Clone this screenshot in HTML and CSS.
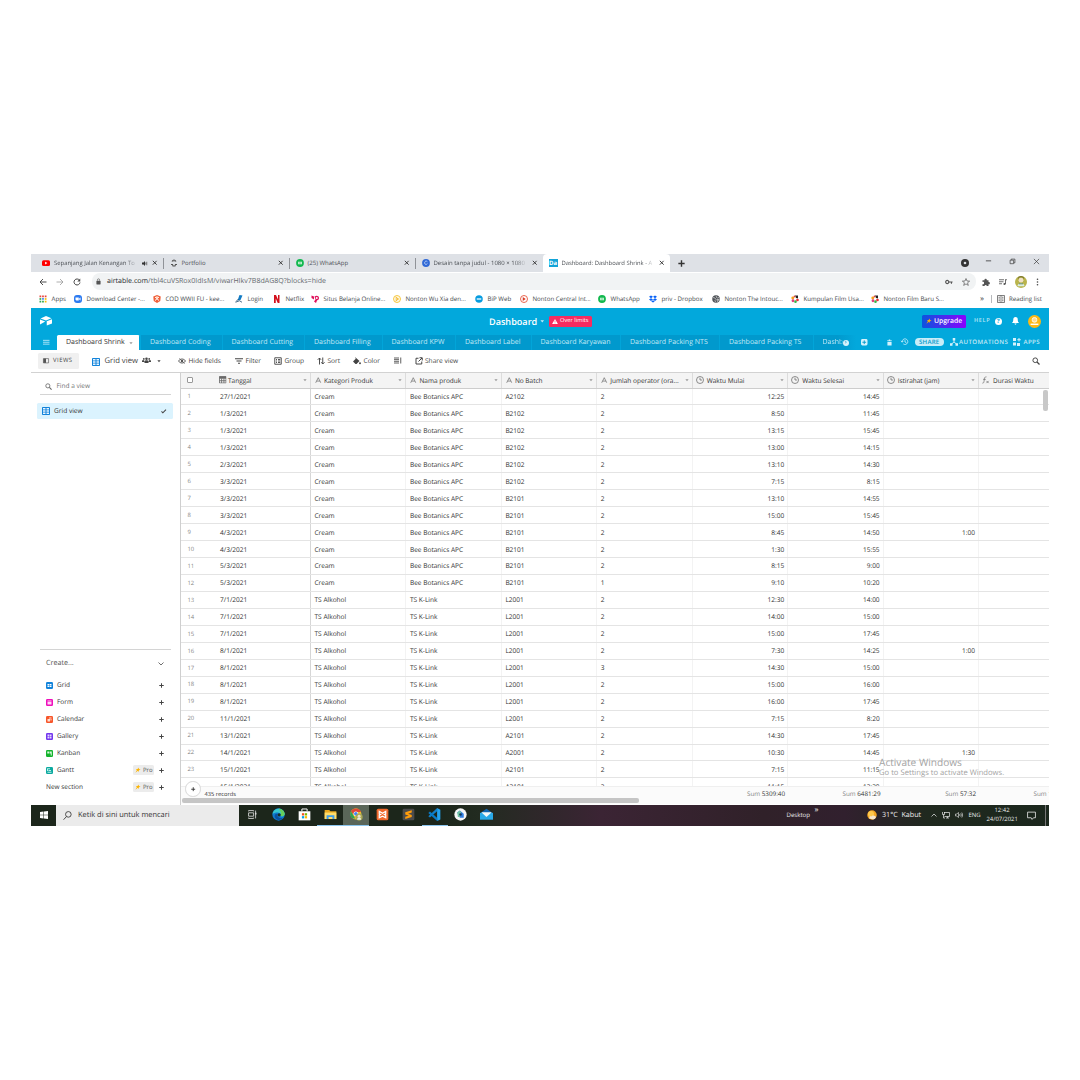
FILE: index.html
```html
<!DOCTYPE html>
<html lang="id">
<head>
<meta charset="utf-8">
<title>Dashboard: Dashboard Shrink - Airtable</title>
<link rel="stylesheet" href="styles.css">
</head>
<body>
<svg class="sprite" aria-hidden="true">
  <symbol id="x" viewBox="0 0 10 10"><path d="M1.5 1.5l7 7M8.5 1.5l-7 7" stroke="currentColor" stroke-width="1.7" fill="none"/></symbol>
  <symbol id="plus" viewBox="0 0 10 10"><path d="M5 .5v9M.5 5h9" stroke="currentColor" stroke-width="2" fill="none"/></symbol>
  <symbol id="caret" viewBox="0 0 10 10"><path d="M1 3h8L5 8z" fill="currentColor"/></symbol>
  <symbol id="search" viewBox="0 0 16 16"><circle cx="6.5" cy="6.5" r="4.7" fill="none" stroke="currentColor" stroke-width="1.9"/><path d="M10 10l5 5" stroke="currentColor" stroke-width="2.4"/></symbol>
  <symbol id="whatsapp" viewBox="0 0 16 16"><circle cx="8" cy="8" r="7.8" fill="#12b84e"/><path d="M4 5.5h8v5H4z" fill="#d9f7e3"/><path d="M5 8h6" stroke="#12b84e" stroke-width="1.2"/></symbol>
  <symbol id="film" viewBox="0 0 16 16"><circle cx="3.500" cy="6" r="2.800" fill="#f7a11a"/><path d="M8 1h6v6l-4-1z" fill="#222"/><circle cx="4" cy="11.500" r="2.800" fill="#e23c7c"/><circle cx="9" cy="13.300" r="2.600" fill="#39b54a"/><circle cx="13" cy="10" r="2.700" fill="#e33"/><circle cx="7" cy="3" r="1.800" fill="#e8453c"/></symbol>
  <symbol id="gridicon" viewBox="0 0 16 16"><rect width="16" height="16" rx="1.5" fill="#1283da"/><path d="M2 2h5v3H2zM9 2h5v3H9zM2 6.600h5v3H2zM9 6.600h5v3H9zM2 11.200h5v3H2zM9 11.200h5v3H9z" fill="#eaf6ff"/></symbol>
  <symbol id="letter" viewBox="0 0 14 14"><path d="M1.500 12.500L7 1.500l5.500 11M3.500 8.800h7" fill="none" stroke="currentColor" stroke-width="1.500"/></symbol>
  <symbol id="clock" viewBox="0 0 16 16"><circle cx="8" cy="8" r="7" fill="none" stroke="currentColor" stroke-width="1.500"/><path d="M8 3.500V8h4" fill="none" stroke="currentColor" stroke-width="1.500"/></symbol>
  <symbol id="date" viewBox="0 0 16 16"><path d="M1 1h14v14H1zM1 5h14M5.500 5v10M10.500 5v10M1 10h14" fill="none" stroke="currentColor" stroke-width="1.800"/><path d="M1 1h14v3H1z" fill="currentColor"/></symbol>
  <symbol id="fx" viewBox="0 0 18 16"><path d="M1 15c3 1 3.500-3 4-7s1-8 5-7M2.500 6.500h6M10 10l5 5M15 10l-5 5" fill="none" stroke="currentColor" stroke-width="1.600"/></symbol>
  <symbol id="spark" viewBox="0 0 16 16"><path d="M9 1l1.500 4.500L15 7l-4.500 1.500L9 13l-1.500-3L1 15l4-6.500L2.500 6 7 5.500z" fill="#fcb400"/></symbol>
</svg>

<main class="screen">
  <header class="tabstrip">
    <div class="tab"><svg viewBox="0 0 16 16"><rect y="2.500" width="16" height="11.500" rx="3" fill="#f00"/><path d="M6.300 5.500l4.500 2.700-4.500 2.700z" fill="#fff"/></svg><span class="title">Sepanjang Jalan Kenangan To</span><svg class="sound" viewBox="0 0 12 10"><path d="M0 3h3l3-3v10L3 7H0z" fill="#333"/><path d="M7.500 3v4M9.500 1.500v7" stroke="#333" stroke-width="1.200"/></svg><svg class="close"><use href="#x"/></svg></div>
    <div class="tab"><svg viewBox="0 0 16 16"><path d="M4 5c2-3 6-3 8 0M2 11h3l1 3h4l1-3h3" stroke="#555" stroke-width="2.200" fill="none"/><circle cx="8" cy="3" r="1.800" fill="#777"/></svg><span class="title">Portfolio</span><svg class="close"><use href="#x"/></svg></div>
    <div class="tab"><svg><use href="#whatsapp"/></svg><span class="title">(25) WhatsApp</span><svg class="close"><use href="#x"/></svg></div>
    <div class="tab"><svg viewBox="0 0 16 16"><circle cx="8" cy="8" r="7.800" fill="#3169d6"/><path d="M10.800 5.500c-3-3-6 0-5.500 3 .5 2.800 3.500 3 5.500.8" stroke="#d9eaff" stroke-width="1.500" fill="none"/></svg><span class="title">Desain tanpa judul - 1080 × 1080</span><svg class="close"><use href="#x"/></svg></div>
    <div class="tab active"><b class="da">Da</b><span class="title">Dashboard: Dashboard Shrink - A</span><svg class="close"><use href="#x"/></svg></div>
    <svg class="newtab"><use href="#plus"/></svg>
    <div class="window-controls">
      <svg viewBox="0 0 16 16"><circle cx="8" cy="8" r="8" fill="#333"/><circle cx="8" cy="8" r="2.600" fill="#dee1e6"/></svg>
      <svg viewBox="0 0 16 16"><path d="M2 6.500h12" stroke="#333" stroke-width="1.800"/></svg>
      <svg viewBox="0 0 16 16"><path d="M2.500 5h8v8h-8zM5 4.500V2.500h8.500V11H11" stroke="#333" stroke-width="1.500" fill="none"/></svg>
      <svg viewBox="0 0 16 16"><path d="M2 2l12 12M14 2L2 14" stroke="#333" stroke-width="1.500"/></svg>
    </div>
  </header>

  <div class="address-row">
    <svg viewBox="0 0 16 16"><path d="M15 8H2M8 2L2 8l6 6" stroke="#444" stroke-width="1.900" fill="none"/></svg>
    <svg viewBox="0 0 16 16"><path d="M1 8h13M8 2l6 6-6 6" stroke="#999" stroke-width="1.600" fill="none"/></svg>
    <svg viewBox="0 0 16 16"><path d="M13 4.500A6 6 0 1 0 14 9" stroke="#444" stroke-width="2" fill="none"/><path d="M14.500 1v6h-6z" fill="#444"/></svg>
    <div class="omnibox">
      <svg class="lock" viewBox="0 0 12 16"><rect x="1" y="6" width="10" height="9" rx="1" fill="#555"/><path d="M3.500 6V4a2.500 2.500 0 0 1 5 0v2" stroke="#555" stroke-width="1.500" fill="none"/></svg>
      <span class="url"><b>airtable.com</b>/tbl4cuVSRox0IdIsM/viwarHIkv7B8dAG8Q?blocks=hide</span>
      <svg class="key" viewBox="0 0 18 12"><circle cx="5" cy="6" r="3.500" fill="none" stroke="#555" stroke-width="2.600"/><path d="M9 6h8M14.500 6v4" stroke="#555" stroke-width="2.500"/></svg>
      <svg class="star" viewBox="0 0 16 16"><path d="M8 1l2 5 5.300.3-4.200 3.300 1.500 5.200L8 11.800l-4.600 3 1.500-5.200L.7 6.300 6 6z" stroke="#555" stroke-width="1.400" fill="none"/></svg>
    </div>
    <svg viewBox="0 0 16 16"><path d="M1 4.500h4a2.300 2.300 0 1 1 4.500 0H13V8a2.300 2.300 0 1 1 0 4.500V16H9.500a2.200 2.200 0 1 0-4.400 0H1v-4a2.200 2.200 0 1 0 0-4z" fill="#555"/></svg>
    <svg viewBox="0 0 16 16"><path d="M0 3.500h10M0 7.500h9M0 11.500h6M13 3v9M12.500 3.500H16" stroke="#555" stroke-width="1.700"/><circle cx="11" cy="12" r="2.200" fill="#555"/></svg>
    <svg class="profile" viewBox="0 0 20 20"><circle cx="10" cy="10" r="10" fill="#b9b44c"/><circle cx="10" cy="7" r="4" fill="#efe0c7"/><path d="M4 17c1-7 11-7 12 0" fill="#dceee2"/><path d="M5 4c2-4 8-4 10 0" stroke="#7d7730" stroke-width="2" fill="none"/><path d="M6.500 13h7" stroke="#577b55" stroke-width="1.500"/></svg>
    <svg class="kebab" viewBox="0 0 6 16"><circle cx="3" cy="2.500" r="1.600"/><circle cx="3" cy="8" r="1.600"/><circle cx="3" cy="13.500" r="1.600"/></svg>
  </div>

  <nav class="bookmarks">
    <a><svg viewBox="0 0 16 16"><path d="M1 1h3.500v3.500H1zM6.200 1h3.500v3.500H6.200zM11.500 1H15v3.500h-3.500z" fill="#e8453c"/><path d="M1 6.200h3.500v3.500H1z" fill="#34a853"/><path d="M6.200 6.200h3.500v3.500H6.200z" fill="#4285f4"/><path d="M11.500 6.200H15v3.500h-3.500z" fill="#fbbc05"/><path d="M1 11.500h3.500V15H1zM6.200 11.500h3.500V15H6.200z" fill="#34a853"/><path d="M11.500 11.500H15V15h-3.500z" fill="#fbbc05"/></svg>Apps</a>
    <a><svg viewBox="0 0 16 16"><rect width="16" height="16" rx="6" fill="#2d7bf0"/><path d="M3 5h6.500v6H4.500L3 9.500zM10.300 7L13 5v6l-2.700-2z" fill="#fff"/></svg>Download Center -...</a>
    <a><svg viewBox="0 0 16 16"><path d="M8 0l7.500 3-1 9L8 16l-6.500-4-1-9z" fill="#f0603a"/><path d="M4 4l8 7M12 4l-8 7" stroke="#fff" stroke-width="2"/><circle cx="8" cy="5" r="2.500" fill="#ffd7c4"/></svg>COD WWII FU - kee...</a>
    <a><svg viewBox="0 0 16 16"><path d="M9 0l6 1-4 9-6 1z" fill="#127bc4"/><path d="M1 14.500l8-3 5 3M7 8l-5 5" stroke="#214b6e" stroke-width="1.600" fill="none"/></svg>Login</a>
    <a><svg viewBox="0 0 16 16"><path d="M2 0h4l4 9V0h3v16H9.500L5.500 7v9H2z" fill="#d3101c"/></svg>Netflix</a>
    <a><svg viewBox="0 0 16 16"><path d="M1 1l5 2v6L1 6zM7 3c4-3 9-1 9 3 0 3-2 4-4 5l-2 5-4-3 3-4z" fill="#e0115b"/><circle cx="11.500" cy="6" r="2" fill="#fff"/></svg>Situs Belanja Online...</a>
    <a><svg viewBox="0 0 16 16"><circle cx="8" cy="8" r="7" stroke="#f4bf26" stroke-width="1.700" fill="#fffbe9"/><path d="M5 4l6 4-6 4M5 8h3" stroke="#f0ae12" stroke-width="1.800" fill="none"/></svg>Nonton Wu Xia den...</a>
    <a><svg viewBox="0 0 16 16"><circle cx="8" cy="8" r="7.500" fill="#079cdf"/><path d="M3.500 8h9" stroke="#d4f1ff" stroke-width="3"/></svg>BiP Web</a>
    <a><svg viewBox="0 0 16 16"><circle cx="8" cy="8" r="7" stroke="#e8553b" stroke-width="1.800" fill="#fff"/><path d="M5.500 4l6 4-6 4z" fill="#d83b28"/></svg>Nonton Central Int...</a>
    <a><svg><use href="#whatsapp"/></svg>WhatsApp</a>
    <a><svg viewBox="0 0 16 16"><path d="M4 1l4 2.700-4 2.700L0 3.700zM12 1l4 2.700-4 2.700-4-2.700zM4 6.400l4 2.700-4 2.700-4-2.700zM12 6.400l4 2.700-4 2.700-4-2.700zM8 10.500l3.500 2.300L8 15l-3.500-2.200z" fill="#0b63f6"/></svg>priv - Dropbox</a>
    <a><svg viewBox="0 0 16 16"><circle cx="8" cy="8" r="7.500" fill="#505459"/><path d="M2 5l4 1 2 3-2 2 1 3M9 2l-1 2 3 2 3-1M10 9l4 0-3 4z" stroke="#e8e8e8" stroke-width="1.200" fill="none"/></svg>Nonton The Intouc...</a>
    <a><svg><use href="#film"/></svg>Kumpulan Film Usa...</a>
    <a><svg><use href="#film"/></svg>Nonton Film Baru S...</a>
    <span class="more">»</span>
    <a class="reading"><svg viewBox="0 0 16 16"><path d="M1 1h14v14H1zM8 1v14" stroke="#555" fill="none" stroke-width="1.500"/><path d="M3 4.500h3M3 8h3M3 11.500h3M10 4.500h3M10 8h3M10 11.500h3" stroke="#555" stroke-width="1.500"/></svg>Reading list</a>
  </nav>

  <section class="base-header">
    <svg class="logo" viewBox="0 0 24 20"><path d="M1 5L12 0l11 4.500L12 9z" fill="#fff"/><path d="M13.500 10.500L24 6.500v8.500l-10.500 4z" fill="#fff"/><path d="M0 7l10.500 4L0 17z" fill="#fff"/></svg>
    <div class="base-title"><strong>Dashboard</strong><svg><use href="#caret"/></svg><span class="limits"><svg viewBox="0 0 14 12"><path d="M7 0l7 12H0z" fill="#fff"/><path d="M7 4v4M7 9v1.500" stroke="#f82b60" stroke-width="1.400"/></svg>Over limits</span></div>
    <div class="account">
      <span class="upgrade"><svg><use href="#spark"/></svg>Upgrade</span>
      <span class="help">HELP</span>
      <span class="question">?</span>
      <svg class="bell" viewBox="0 0 14 16"><path d="M7 0c3 0 4.500 2 4.500 5 0 4 1 5 2.500 7H0c1.500-2 2.500-3 2.500-7C2.500 2 4 0 7 0zM5 13h4c0 3-4 3-4 0z" fill="#fff"/></svg>
      <svg class="avatar" viewBox="0 0 20 20"><circle cx="10" cy="10" r="10" fill="#fcb916"/><rect x="6.500" y="4" width="7" height="7" rx="3" fill="#fbdc94" stroke="#fff" stroke-width="1.300"/><path d="M4 14.300h12" stroke="#fff" stroke-width="2.200"/></svg>
    </div>
  </section>

  <nav class="tables">
    <svg class="menu" viewBox="0 0 12 10"><path d="M0 1.500h12M0 5h12M0 8.500h12" stroke="#c9effc" stroke-width="1.500"/></svg>
    <a class="current">Dashboard Shrink<svg><use href="#caret"/></svg></a>
    <a>Dashboard Coding</a><a>Dashboard Cutting</a><a>Dashboard Filling</a><a>Dashboard KPW</a><a>Dashboard Label</a><a>Dashboard Karyawan</a><a>Dashboard Packing NTS</a><a>Dashboard Packing TS</a>
    <a class="cut"><span>Dashb</span><i></i></a>
    <svg class="addtable" viewBox="0 0 14 14"><rect width="14" height="14" rx="3" fill="#d5f2fc"/><path d="M7 3v8M3 7h8" stroke="#0198cb" stroke-width="2"/></svg>
    <svg class="trash" viewBox="0 0 12 14"><path d="M0 2h3.500l1-2h3l1 2H12v1.500H0zM1 5h10v9H1z" fill="#d5f2fc"/></svg>
    <svg class="history" viewBox="0 0 16 16"><path d="M2.500 8A6 6 0 1 1 5 12.700M0 6l2.500 3L5 6M8.500 4.500V8.500l3 1.500" stroke="#d5f2fc" stroke-width="1.700" fill="none"/></svg>
    <span class="share">SHARE</span>
    <span class="auto"><svg viewBox="0 0 16 16"><path d="M8 4v4L3 12M8 8l5 4" stroke="#d5f2fc" stroke-width="1.800" fill="none"/><path d="M5.500 0h5v5h-5zM0 10.500h5v5H0zM11 10.500h5v5h-5z" fill="#d5f2fc"/></svg>AUTOMATIONS</span>
    <span class="apps"><svg viewBox="0 0 16 16"><path d="M0 0h6v6H0zM0 9h6v6H0zM8 10h6v6H8zM11 0h2v7h-2zM8.500 2.500h7v2h-7z" fill="#d5f2fc"/></svg>APPS</span>
  </nav>

  <div class="viewbar">
    <span class="views"><svg viewBox="0 0 14 12"><path d="M1 1h12v10H1z" fill="none" stroke="#555" stroke-width="1.500"/><path d="M1 1h6v10H1z" fill="#555"/></svg>VIEWS</span>
    <span class="viewname"><svg><use href="#gridicon"/></svg>Grid view</span>
    <svg class="people" viewBox="0 0 20 14"><circle cx="10" cy="3.500" r="2.800"/><circle cx="4" cy="4" r="2"/><circle cx="16" cy="4" r="2"/><path d="M5.500 13V9.500c1-3 8-3 9 0V13zM0 11V8c1-2 4-2 5 0v3zM15 11V8c1-2 4-2 5 0v3z"/></svg>
    <svg class="smallcaret"><use href="#caret"/></svg>
    <span><svg viewBox="0 0 18 14"><path d="M1 7c4-6 12-6 16 0-4 6-12 6-16 0z" fill="none" stroke="#555" stroke-width="2"/><circle cx="9" cy="7" r="2.800" fill="#555"/><path d="M3 1l12 12" stroke="#555" stroke-width="1.500"/></svg>Hide fields</span>
    <span><svg viewBox="0 0 16 16"><path d="M0 3.500h16M3 8h10M6 12.500h4" stroke="#444" stroke-width="2.200"/></svg>Filter</span>
    <span><svg viewBox="0 0 16 16"><path d="M1.500 1.500h13v13h-13zM4 5h2M8 5h4.500M4 8h2M8 8h4.500M4 11h2M8 11h4.500" stroke="#444" stroke-width="1.800" fill="none"/></svg>Group</span>
    <span><svg viewBox="0 0 16 16"><path d="M5 15V2M1.500 5.500L5 2l3 3.500M11.500 1v13M8.500 10.500l3 3.500 3.500-3.500" stroke="#444" stroke-width="1.900" fill="none"/></svg>Sort</span>
    <span><svg viewBox="0 0 16 16"><path d="M4 0l9 8-6 6H5L0 9l5.500-5.500z" fill="#444"/><circle cx="14" cy="12.500" r="1.900" fill="#444"/></svg>Color</span>
    <svg class="rowheight" viewBox="0 0 16 14"><path d="M0 2h10M0 5.300h10M0 8.600h10M0 12h10M13.500 1v12" stroke="#444" stroke-width="1.700"/></svg>
    <span><svg viewBox="0 0 16 16"><path d="M7 2.500H2V14h11.500V9M7 9l7-7M9 1.500h5.500V7" stroke="#444" stroke-width="2" fill="none"/></svg>Share view</span>
    <svg class="find"><use href="#search"/></svg>
  </div>

  <div class="workspace">
    <aside class="sidebar">
      <div class="findview"><svg><use href="#search"/></svg>Find a view</div>
      <div class="selected"><svg><use href="#gridicon"/></svg><span>Grid view</span><svg class="check" viewBox="0 0 12 10"><path d="M1 5.500l3 3L11 1.500" stroke="#444" stroke-width="2.300" fill="none"/></svg></div>
      <div class="create">
        <div class="create-title">Create...<svg viewBox="0 0 12 8"><path d="M1 1l5 5 5-5" stroke="#555" stroke-width="1.700" fill="none"/></svg></div>
        <div class="kind"><svg viewBox="0 0 14 14"><rect width="14" height="14" rx="2.500" fill="#1283da"/><path d="M3 4h3.500v2.500H3zM7.500 4H11v2.500H7.500zM3 7.500h3.500V10H3zM7.500 7.500H11V10H7.500z" fill="#fff"/></svg><span>Grid</span><svg class="add"><use href="#plus"/></svg></div>
        <div class="kind"><svg viewBox="0 0 14 14"><rect width="14" height="14" rx="2.500" fill="#ee0fbb"/><path d="M3 3h8v2H3zM3 6h8v5H3z" fill="#ffd6f6"/></svg><span>Form</span><svg class="add"><use href="#plus"/></svg></div>
        <div class="kind"><svg viewBox="0 0 14 14"><rect width="14" height="14" rx="2.500" fill="#f7562a"/><path d="M3 6h5v5H3zM6 3h5v2H6zM9 6h2v3H9z" fill="#ffe0d5"/></svg><span>Calendar</span><svg class="add"><use href="#plus"/></svg></div>
        <div class="kind"><svg viewBox="0 0 14 14"><rect width="14" height="14" rx="2.500" fill="#7337ee"/><path d="M3 3h3.500v3.500H3zM7.500 3H11v3.500H7.500zM3 7.500h3.500V11H3zM7.500 7.500H11V11H7.500z" fill="#e6dafd"/></svg><span>Gallery</span><svg class="add"><use href="#plus"/></svg></div>
        <div class="kind"><svg viewBox="0 0 14 14"><rect width="14" height="14" rx="2.500" fill="#14b32c"/><path d="M2.500 3h4v4h-4zM7.500 3h4v8h-2V7h-2z" fill="#dbf8df"/></svg><span>Kanban</span><svg class="add"><use href="#plus"/></svg></div>
        <div class="kind"><svg viewBox="0 0 14 14"><rect width="14" height="14" rx="2.500" fill="#0ca99f"/><path d="M3 3.500h5M5 7h5M3 10.500h8M3 3v5" stroke="#dcfaf7" stroke-width="1.700"/></svg><span>Gantt</span><em><svg><use href="#spark"/></svg>Pro</em><svg class="add"><use href="#plus"/></svg></div>
        <div class="kind"><span>New section</span><em><svg><use href="#spark"/></svg>Pro</em><svg class="add"><use href="#plus"/></svg></div>
      </div>
    </aside>

    <section class="grid">
      <div class="row head">
        <div class="first"><i class="checkbox"></i><svg><use href="#date"/></svg><span>Tanggal</span><svg class="drop"><use href="#caret"/></svg></div>
        <div><svg><use href="#letter"/></svg><span>Kategori Produk</span><svg class="drop"><use href="#caret"/></svg></div>
        <div><svg><use href="#letter"/></svg><span>Nama produk</span><svg class="drop"><use href="#caret"/></svg></div>
        <div><svg><use href="#letter"/></svg><span>No Batch</span><svg class="drop"><use href="#caret"/></svg></div>
        <div><svg><use href="#letter"/></svg><span>Jumlah operator (ora...</span><svg class="drop"><use href="#caret"/></svg></div>
        <div class="time"><svg><use href="#clock"/></svg><span>Waktu Mulai</span><svg class="drop"><use href="#caret"/></svg></div>
        <div class="time"><svg><use href="#clock"/></svg><span>Waktu Selesai</span><svg class="drop"><use href="#caret"/></svg></div>
        <div class="time"><svg><use href="#clock"/></svg><span>Istirahat (jam)</span><svg class="drop"><use href="#caret"/></svg></div>
        <div class="time"><svg><use href="#fx"/></svg><span>Durasi Waktu</span></div>
      </div>
      <div class="body" id="rows"></div>
      <div class="summary">
        <div class="records">435 records</div>
        <div class="sum"><i>Sum</i> 5309:40</div><div class="sum"><i>Sum</i> 6481:29</div><div class="sum"><i>Sum</i> 57:32</div><div class="last"><i>Sum</i> 1</div>
      </div>
      <div class="hscroll"></div>
      <div class="vscroll"></div>
      <div class="addrow"><svg><use href="#plus"/></svg></div>
      <div class="activate"><p>Activate Windows</p>Go to Settings to activate Windows.</div>
    </section>
  </div>

  <footer class="taskbar">
    <div class="start"><svg viewBox="0 0 16 16"><path d="M0 2.200L7 1.200v6.300H0zM8 1l8-1v7.500H8zM0 8.500h7v6.300l-7-1zM8 8.500h8V16l-8-1z" fill="#fff"/></svg></div>
    <div class="tasksearch"><svg viewBox="0 0 16 16"><circle cx="9.500" cy="6" r="5" fill="none" stroke="#333" stroke-width="1.500"/><path d="M6 10l-5 5.500" stroke="#333" stroke-width="1.500"/></svg><span>Ketik di sini untuk mencari</span></div>
    <div class="pinned">
      <div><svg class="taskview" viewBox="0 0 16 16"><path d="M1 2.500V1h9v1.500M1 5h9v6H1zM1 13.500V15h9v-1.500M13.500 1v14" stroke="#ddd" stroke-width="1.500" fill="none"/><path d="M12.500 5h2.500v3h-2.500z" fill="#ddd"/></svg></div>
      <div><svg viewBox="0 0 20 20"><circle cx="10" cy="10" r="9.500" fill="#0f79cf"/><path d="M1 9C2-1 18-2 19.500 9c.2 5-6 5-7 2C14 7 8 5 1 9z" fill="#36c6d0"/><path d="M10 1c6 0 9 4 9.500 8 0 4-5 4-6.500 3 2-3 0-8-3-11z" fill="#65cf5b"/><path d="M8 9c-1 5 4 8 9 6-5 6-12 3-13-2 0-3 2-4 4-4z" fill="#0b4f9e"/><circle cx="11" cy="10.500" r="2.500" fill="#1c2c22"/></svg></div>
      <div><svg viewBox="0 0 20 20"><path d="M6 5V1.500h8V5" stroke="#fff" stroke-width="1.500" fill="none"/><path d="M1 5h18v14H1z" fill="#fff"/><path d="M6 8h3.500v3.500H6z" fill="#f25022"/><path d="M10.500 8H14v3.500h-3.500z" fill="#7fba00"/><path d="M6 12.500h3.500V16H6z" fill="#00a4ef"/><path d="M10.500 12.500H14V16h-3.500z" fill="#ffb900"/></svg></div>
      <div class="open"><svg viewBox="0 0 20 20"><path d="M1 3h7l2 2h9v12H1z" fill="#e9a820"/><path d="M1 7h18v10H1z" fill="#ffdc6a"/><path d="M4 11h12v6h-3v-3H7v3H4z" fill="#3d9be9"/></svg></div>
      <div class="open focus"><svg viewBox="0 0 20 20"><circle cx="9" cy="9" r="8.500" fill="#eac12d"/><path d="M1.500 5C5-1 14-1 17 6H9L5 10z" fill="#de4638"/><path d="M1.500 5L8 16C0 17-1 9 1.500 5z" fill="#2fa355"/><circle cx="9" cy="9" r="3.700" fill="#fff"/><circle cx="9" cy="9" r="2.800" fill="#4285f4"/><circle cx="14" cy="14" r="5.500" fill="#aaa855"/><circle cx="14" cy="12.500" r="2.300" fill="#efe0c7"/><path d="M11 18c0-5 6-5 6 0z" fill="#e7efe2"/></svg></div>
      <div><svg viewBox="0 0 20 20"><rect x="1" y="1" width="18" height="18" rx="2.500" fill="#f0682c"/><path d="M5 5l5 3 5-3v4l-2 1 2 1v4l-5-2.500L5 15v-4l2-1-2-1z" fill="none" stroke="#fff" stroke-width="1.900"/></svg></div>
      <div><svg viewBox="0 0 20 20"><rect x="1" y="1" width="18" height="18" rx="2" fill="#4b4b4b"/><path d="M15 3.500v3.500L9.500 8.700l5.500 2v3.200L5 17v-3.400l5.500-1.800L5 10V6.700z" fill="#ff9d0a"/></svg></div>
      <div class="open"><svg viewBox="0 0 20 20"><path d="M14 0l5 2.500v15L14 20z" fill="#24a3ef"/><path d="M14 0v5L3 14.500l-2.500-2z" fill="#107fca"/><path d="M14 20v-5L3 5.500.5 7.500z" fill="#087bc8"/></svg></div>
      <div><svg viewBox="0 0 20 20"><circle cx="10" cy="10" r="9.500" fill="#f6f6f6"/><path d="M5 7l4-3 6 5v6H9z" fill="#307de1"/><path d="M5 7l4-3 2 3-2 7H6z" fill="#6fc3a4"/><circle cx="10" cy="10" r="2" fill="#12365c"/></svg></div>
      <div><svg viewBox="0 0 20 20"><path d="M0 8l10-7 10 7z" fill="#1265b1"/><path d="M0 7.500h20V18H0z" fill="#29a9e8"/><path d="M2 6.500h16L10 14z" fill="#f5f8fa"/></svg></div>
    </div>
    <div class="tray">
      <span class="desk">Desktop</span><span class="chev">»</span>
      <svg class="weather" viewBox="0 0 20 20"><circle cx="10" cy="10" r="9.500" fill="#f5a623"/><circle cx="8" cy="8" r="6" fill="#ffc94c"/><path d="M5 17c-2-5 3-5 4-4 2-4 8-2 9 1-1 3-3 5-6 5z" fill="#f6e6cd"/></svg>
      <span class="temp">31°C&nbsp; Kabut</span>
      <svg class="up" viewBox="0 0 12 8"><path d="M1 7l5-5 5 5" fill="none" stroke="#eee" stroke-width="1.400"/></svg>
      <svg class="net" viewBox="0 0 16 14"><path d="M4 2h11v8H5M8 13h6M11 10v3M1 1v5h4V1M3 6v7h3" fill="none" stroke="#eee" stroke-width="1.400"/></svg>
      <svg class="vol" viewBox="0 0 16 14"><path d="M1 5h2.500L7 2v10L3.500 9H1zM9.500 5v4M11.500 3.500c1.500 2 1.500 5 0 7M13.500 2c2.300 3 2.300 7 0 10" fill="none" stroke="#eee" stroke-width="1.200"/></svg>
      <span class="lang">ENG</span>
      <span class="time-date">12:42<br>24/07/2021</span>
      <svg class="notice" viewBox="0 0 16 16"><path d="M1 2h14v10h-3.500l-2.500 3-1.500-3H1z" fill="none" stroke="#eee" stroke-width="1.400"/></svg>
      <i class="peek"></i>
    </div>
  </footer>
</main>
<script src="app.js"></script>
</body>
</html>
```
FILE: styles.css
```css
* { box-sizing: border-box; }
body {
  margin: 0;
  background: #fff;
  color: #333;
  font: 6.5px/1 "Open Sans", "Noto Sans", sans-serif;
  text-rendering: geometricPrecision;
}
svg { display: block; flex: none; overflow: visible; width: 8px; height: 8px; }
i, em { font-style: normal; }
p { margin: 0; }
.sprite { position: absolute; width: 0; height: 0; }
.screen {
  width: 1018px;
  height: 572px;
  margin: 254px 0 0 31px;
  display: grid;
  grid-template-rows: 18px 18px 18px 26.500px 15px 23px 432px 21px;
  overflow: hidden;
  white-space: nowrap;
}

/* Browser chrome */
.tabstrip { display: grid; grid-template-columns: 133px 126px 126px 127px 127px 31px 1fr; background: #dee1e6; }
.tab { display: flex; align-items: center; gap: 4px; padding: 0 6px 0 5.500px; position: relative; font-size: 6px; color: #4b4f54; }
.tab:first-child { padding-left: 11px; }
.tab:nth-child(-n+3) { border-right: 1px solid #9a9da1; border-image: linear-gradient(transparent 25%, #909398 25% 80%, transparent 80%) 1; }
.tab .title { flex: 1; line-height: 10px; mask-image: linear-gradient(90deg, #000 85%, transparent); }
.tab:nth-child(-n+3):not(:first-child) .title { mask-image: none; }
.tab .close { width: 5.500px; height: 5.500px; color: #333; }
.tab .sound { width: 6px; height: 5px; }
.tab:first-child .title { font-size: 5.900px; }
.tab:last-of-type { font-size: 6px; }
.tab.active { background: #fff; border-radius: 4px 4px 0 0; font-size: 5.850px; }
.da { width: 9px; height: 8.500px; background: #12a4d8; color: #fff; font-size: 6px; line-height: 8px; text-align: center; }
.newtab { width: 7px; height: 7px; margin: 5.500px 0 0 7.500px; color: #333; }
.window-controls { display: grid; grid-template-columns: 24px 24px 24px 8px; justify-content: end; padding: 4px 8px 0 0; }
.window-controls svg { width: 7px; height: 7px; }
.window-controls svg:first-child { width: 8px; height: 8px; margin-top: 1px; }
.address-row { display: grid; grid-template-columns: 17px 17px 19px 890px 17px 18px 19px 10px; padding-left: 8px; align-items: center; padding-top: 1px; }
.address-row > svg:nth-of-type(-n+3) { width: 8px; height: 8px; }
.omnibox { display: grid; grid-template-columns: 11px 838px 17px 10px; align-items: center; width: 884px; height: 16.500px; padding-left: 4px; background: #f1f3f4; border-radius: 8px; font-size: 7.050px; color: #666a6f; }
.omnibox b { font-weight: 500; color: #25282c; }
.url { padding-top: 1px; }
.lock { width: 5px; height: 7px; }
.key { width: 8px; height: 6px; }
.profile { width: 12px; height: 12px; margin-left: -2px; }
.address-row > .kebab { width: 3px; height: 8px; margin-left: 0; fill: #444; }
.bookmarks { display: grid; grid-template-columns: 35px 79px 82px 38px 38px 82px 82px 45px 78px 51px 63px 79px 80px 109px 11px 1fr; align-items: center; padding-left: 8px; font-size: 6.150px; color: #43474b; }
.bookmarks a { display: flex; align-items: center; gap: 4.500px; }
.bookmarks .more { font-size: 8px; }
.bookmarks .reading { border-left: 1px solid #b6b8bb; padding-left: 5px; gap: 4px; }

/* Base header and table tabs */
.base-header { display: grid; grid-template-columns: 458px 432px 1fr; align-items: center; background: #02a8dc; color: #fff; }
.logo { width: 12px; height: 10px; margin-left: 9px; }
.base-title { display: grid; grid-template-columns: 51px 9px auto; justify-content: start; align-items: center; }
.base-title strong { font-size: 9.100px; font-weight: 600; }
.base-title > svg { width: 4.500px; height: 4.500px; color: #c3edfa; }
.limits { display: flex; align-items: center; gap: 2px; width: 42.500px; height: 11.500px; padding-left: 3px; background: #f82b60; border-radius: 1.500px; font-size: 5.700px; font-weight: 500; }
.limits svg { width: 6px; height: 5px; }
.account { display: grid; grid-template-columns: 52px 20.500px 17px 16px 13px; align-items: center; padding-left: 1px; }
.upgrade { display: flex; align-items: center; gap: 2px; width: 43.500px; height: 12.500px; padding-left: 4px; background: linear-gradient(90deg, #0b55de, #8b00ff); border-radius: 1.500px; font-size: 6.800px; font-weight: 600; }
.upgrade svg { width: 6px; height: 6px; }
.help { font-size: 5.600px; font-weight: 600; letter-spacing: .6px; color: #b3e5f5; }
.question { width: 7.500px; height: 7.500px; border-radius: 50%; background: #fff; color: #02a8dc; font-size: 6px; font-weight: 700; line-height: 7.500px; text-align: center; }
.bell { width: 7px; height: 8px; }
.avatar { width: 13px; height: 13px; }
.tables { display: grid; grid-template-columns: 26px 84px 81.500px 82.500px 77.500px 73.500px 75.500px 89.500px 99px 93.500px 47.500px 24px 14.500px 13.500px 37px 63px 1fr; background: #02a8dc; color: #c2e9f6; font-size: 7px; font-weight: 500; align-items: center; }
.tables a { display: flex; align-items: center; height: 15px; padding: 1px 0 0 9px; background: #0199cd; border-right: 1px solid #02a5d9; }
.tables .menu { width: 6.500px; height: 6.500px; margin-left: 12px; }
.tables a.current { background: #fff; color: #333; border-radius: 1.500px 1.500px 0 0; width: 83px; gap: 4px; }
.current svg { width: 4px; height: 4px; color: #999; }
.tables a.cut { background: linear-gradient(90deg, #0199cd 50%, #02a8dc 90%); border: 0; }
.cut span { width: 23px; mask-image: linear-gradient(90deg, #000 65%, transparent); }
.cut i { width: 6px; height: 6px; border-radius: 50%; background: #d5f2fc; margin-left: -3px; }
.cut i::before { content: "›"; display: block; color: #0198cb; text-align: center; line-height: 5px; font-size: 7px; }
.addtable { width: 6.500px; height: 6.500px; margin-left: 0; }
.trash { width: 5px; height: 7px; margin-left: 1.500px; }
.history { width: 7.500px; height: 7.500px; margin-left: 1px; }
.share { width: 29.500px; height: 8.500px; margin-left: 1.500px; background: #c8edf8; color: #0198cb; border-radius: 4px; font-size: 6.100px; font-weight: 600; line-height: 8.500px; text-align: center; letter-spacing: .25px; }
.auto, .apps { display: flex; align-items: center; font-size: 6.100px; font-weight: 600; letter-spacing: .42px; gap: 1px; }
.apps { gap: 2.500px; }

/* View controls */
.viewbar { display: grid; grid-template-columns: 54px 50px 14px 22px 57px 39px 43px 36px 40px 21.500px 617px 9px; align-items: center; padding-left: 7px; border-bottom: 1px solid #d2d2d2; font-size: 6.600px; font-weight: 500; color: #444; }
.viewbar > span { display: flex; align-items: center; gap: 2.500px; padding-top: 1px; }
.viewbar .views { width: 41px; height: 16px; padding: 1px 0 0 5px; gap: 4px; background: #f0f0f0; border-radius: 1.500px; font-size: 5.900px; letter-spacing: .5px; }
.views svg { width: 6px; height: 5.500px; }
.viewbar .viewname { font-size: 7.700px; gap: 4.500px; padding-top: 2px; }
.people { width: 9px; height: 6.500px; fill: #444; margin-left: 0; }
.smallcaret { width: 4px; height: 4px; margin-left: 1px; }
.rowheight { height: 7px; margin-left: 1px; }
.workspace { display: grid; grid-template-columns: 149px 869px; }
.sidebar { display: flex; flex-direction: column; color: #333; }
.findview { display: flex; align-items: center; gap: 4.500px; height: 17px; margin: 5.500px 0 0 9px; width: 131px; padding: 1px 0 0 5px; border-bottom: 1px solid #d4d4d4; color: #707070; font-size: 6.500px; }
.findview svg { width: 7px; height: 7px; color: #666; }
.selected { display: flex; align-items: center; gap: 4px; width: 136px; height: 16.500px; margin: 7.500px 0 0 6px; padding: 0 7px 0 5px; background: #dbf3fe; border-radius: 1.500px; font-size: 6.600px; font-weight: 500; }
.selected span { flex: 1; padding-top: 1px; }
.check { width: 5.500px; height: 4.500px; }
.create { margin: auto 0 9px 9px; width: 131px; border-top: 1px solid #d4d4d4; padding: 4px 7px 0 6px; }
.create-title { display: flex; justify-content: space-between; align-items: center; height: 20px; color: #555; font-size: 7.200px; }
.create-title svg { width: 6px; height: 4px; }
.create-title + .kind { margin-top: 3px; }
.kind { display: flex; align-items: center; gap: 4px; height: 17px; font-size: 6.500px; font-weight: 500; }
.kind > svg:first-child { width: 7px; height: 7px; }
.kind span { flex: 1; }
.kind .add { width: 5px; height: 5px; color: #444; }
.kind em { display: flex; align-items: center; gap: 2px; width: 21px; height: 9.500px; padding-left: 2px; margin-right: 1px; background: #ececec; border-radius: 1.500px; font-size: 6px; color: #555; }
.kind em svg { width: 6px; height: 6px; }

/* Record grid */
.grid { position: relative; display: grid; grid-template-rows: 16px 397.500px 18px; border-left: 1.500px solid #cfcfcf; overflow: hidden; }
.row { display: grid; grid-template-columns: 130px repeat(8, 95.450px); height: 16.955px; border-bottom: 1px solid #e4e4e4; align-items: stretch; }
.row > div { display: flex; align-items: center; padding: 1.500px 3px 0 3.500px; border-right: 1px solid #f3f3f3; font-size: 6.550px; }
.row > .first { border-right: 1px solid #d6d6d6; }
.body { overflow: hidden; background: #fff; }
.body .index { width: 39px; padding-left: 6.500px; color: #858585; font-size: 5.900px; }
.body .first { padding-left: 0; }
.body .right { justify-content: flex-end; }
.head { height: 16px; background: #f4f4f4; border-color: #cdcdcd; }
.row.head > div { border-right-color: #dcdcdc; gap: 2.500px; font-size: 6.500px; padding: 0 3px 0 4px; }
.head svg { width: 6.500px; height: 6.500px; color: #696969; }
.head .time svg:first-child { width: 8px; height: 8px; }
.row.head > .time { gap: 3px; padding-left: 3px; }
.head span { flex: 1; padding-top: 1.500px; }
.head svg.drop { width: 4px; height: 4px; color: #999; }
.checkbox { width: 6px; height: 6px; margin-right: 24px; border: .7px solid #999; border-radius: 1px; background: #fff; }
.head .first svg { width: 7.500px; height: 7.500px; }
.head .first svg.drop { width: 4px; height: 4px; }
.row.head > .first { gap: 2px; padding-left: 5.500px; }
.summary { display: grid; grid-template-columns: 511.500px 96px 95.500px 95.500px 1fr; background: #fbfbfb; padding-top: 4px; font-size: 6.300px; border-top: 1px solid #efefef; }
.records { padding: 1px 0 0 23.500px; font-size: 5.700px; }
.sum { text-align: right; padding-right: 3.500px; }
.summary i { color: #888; }
.last { padding-left: 54px; }
.hscroll { position: absolute; left: 1px; top: 425.500px; width: 457px; height: 4.500px; border-radius: 2px; background: #c5c5c5; }
.vscroll { position: absolute; right: 1.500px; top: 17.500px; width: 4.500px; height: 21px; border-radius: 2px; background: #c8c8c8; }
.addrow { position: absolute; left: 4px; top: 408.500px; width: 15.500px; height: 15.500px; display: grid; place-items: center; border: .7px solid #d8d8d8; border-radius: 50%; background: #fff; }
.addrow svg { width: 4.500px; height: 4.500px; }
.activate { position: absolute; left: 698px; top: 384.500px; color: #a3a3a3; font-size: 7.650px; }
.activate p { font-size: 10.100px; line-height: 10px; margin-bottom: 3px; }

/* Windows taskbar */
.taskbar { display: grid; grid-template-columns: 25px 183px 262px 1fr; color: #eee; background: linear-gradient(90deg, #1c261b 0 40%, #222b20 44%, #3b2434 56%, #302129 72%, #31202e 80%, #20291f 88%, #1b271d); }
.start { display: grid; place-items: center; }
.tasksearch { display: flex; align-items: center; gap: 6px; padding-left: 7px; background: #ebebeb; color: #333; font-size: 7.450px; }
.tasksearch span { padding-top: 2px; }
.tasksearch svg { width: 9px; height: 9px; }
.pinned { display: grid; grid-template-columns: repeat(10, 26.100px); }
.pinned > div { display: grid; place-items: center; border-bottom: 1px solid transparent; }
.pinned svg { width: 13px; height: 13px; }
.pinned .taskview { width: 9px; height: 9px; }
.pinned .open { border-bottom-color: #8cc6ef; }
.pinned .focus { background: #5a6659; }
.tray { display: grid; grid-template-columns: 28px 52px 15.500px 48.500px 11.500px 12.500px 14px 18px 31px 22px 1fr; align-items: center; padding-left: 285.500px; font-size: 6.500px; }
.desk { font-size: 6.100px; }
.chev { align-self: start; font-size: 8px; margin-top: 1px; }
.weather { width: 10px; height: 10px; }
.temp { font-size: 7.150px; padding-top: 2px; }
.up { width: 6px; height: 4px; }
.lang { font-size: 6px; }
.time-date { text-align: center; line-height: 9px; font-size: 5.900px; }
.notice { width: 9px; height: 9px; margin-left: 9px; }
.peek { width: .7px; height: 21px; background: #777; margin-left: 5px; }
```
FILE: app.js
```js
const records = [
  ["27/1/2021", "A2102", 2, "12:25", "14:45"],
  ["1/3/2021", "B2102", 2, "8:50", "11:45"],
  ["1/3/2021", "B2102", 2, "13:15", "15:45"],
  ["1/3/2021", "B2102", 2, "13:00", "14:15"],
  ["2/3/2021", "B2102", 2, "13:10", "14:30"],
  ["3/3/2021", "B2102", 2, "7:15", "8:15"],
  ["3/3/2021", "B2101", 2, "13:10", "14:55"],
  ["3/3/2021", "B2101", 2, "15:00", "15:45"],
  ["4/3/2021", "B2101", 2, "8:45", "14:50", "1:00"],
  ["4/3/2021", "B2101", 2, "1:30", "15:55"],
  ["5/3/2021", "B2101", 2, "8:15", "9:00"],
  ["5/3/2021", "B2101", 1, "9:10", "10:20"],
  ["7/1/2021", "L2001", 2, "12:30", "14:00"],
  ["7/1/2021", "L2001", 2, "14:00", "15:00"],
  ["7/1/2021", "L2001", 2, "15:00", "17:45"],
  ["8/1/2021", "L2001", 2, "7:30", "14:25", "1:00"],
  ["8/1/2021", "L2001", 3, "14:30", "15:00"],
  ["8/1/2021", "L2001", 2, "15:00", "16:00"],
  ["8/1/2021", "L2001", 2, "16:00", "17:45"],
  ["11/1/2021", "L2001", 2, "7:15", "8:20"],
  ["13/1/2021", "A2101", 2, "14:30", "17:45"],
  ["14/1/2021", "A2001", 2, "10:30", "14:45", "1:30"],
  ["15/1/2021", "A2101", 2, "7:15", "11:15"],
  ["15/1/2021", "A2101", 2, "11:15", "12:20"]
];

document.getElementById("rows").innerHTML = records.map((record, i) => {
  const [date, batch, operators, start, end, rest = ""] = record;
  const cream = i < 12;
  return `<div class="row">
    <div class="first"><span class="index">${i < 23 ? i + 1 : ""}</span>${date}</div>
    <div>${cream ? "Cream" : "TS Alkohol"}</div>
    <div>${cream ? "Bee Botanics APC" : "TS K-Link"}</div>
    <div>${batch}</div>
    <div>${operators}</div>
    <div class="right">${start}</div>
    <div class="right">${end}</div>
    <div class="right">${rest}</div>
    <div></div>
  </div>`;
}).join("");
```
